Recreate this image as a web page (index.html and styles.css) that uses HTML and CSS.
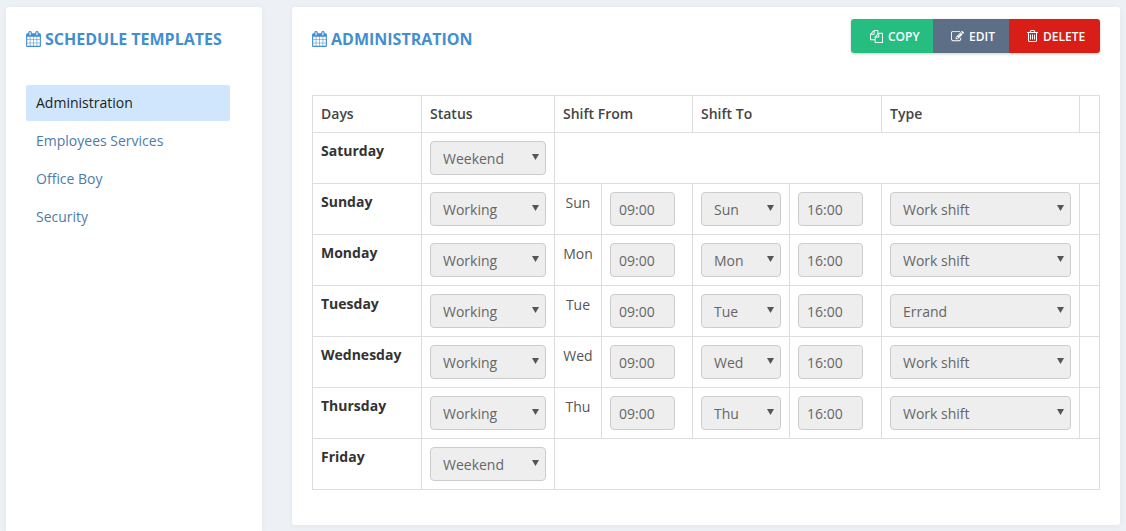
FILE: index.html
```html
<!DOCTYPE html>
<html lang="en">
<head>
    <meta charset="UTF-8">
    <meta name="viewport" content="width=device-width, initial-scale=1.0">
    <title>Schedule Templates</title>
    <link rel="stylesheet" href="styles.css">
</head>
<body>
    <svg width="0" height="0" class="iconDefs">
        <symbol id="iconCalendar" viewBox="0 0 1664 1792">
            <path d="M128 1664h288v-288H128v288zm352 0h320v-288H480v288zm-352-352h288V992H128v320zm352 0h320V992H480v320zM128 928h288V640H128v288zm736 736h320v-288H864v288zM480 928h320V640H480v288zm768 736h288v-288h-288v288zm-384-352h320V992H864v320zM512 448V160q0-13-9.500-22.500T480 128h-64q-13 0-22.500 9.500T384 160v288q0 13 9.500 22.500T416 480h64q13 0 22.500-9.500T512 448zm736 864h288V992h-288v320zM864 928h320V640H864v288zm384 0h288V640h-288v288zm32-480V160q0-13-9.500-22.500T1248 128h-64q-13 0-22.500 9.500T1152 160v288q0 13 9.500 22.500T1184 480h64q13 0 22.500-9.500T1280 448zm384-64v1280q0 52-38 90t-90 38H128q-52 0-90-38t-38-90V384q0-52 38-90t90-38h128v-96q0-66 47-113T416 0h64q66 0 113 47t47 113v96h384v-96q0-66 47-113t113-47h64q66 0 113 47t47 113v96h128q52 0 90 38t38 90z"/>
        </symbol>
        <symbol id="iconCopy" viewBox="0 0 1792 1792">
            <path d="M1696 384q40 0 68 28t28 68v1216q0 40-28 68t-68 28H736q-40 0-68-28t-28-68v-288H96q-40 0-68-28t-28-68V640q0-40 20-88t48-76L476 68q28-28 76-48t88-20h416q40 0 68 28t28 68v328q68-40 128-40h416zm-544 213L853 896h299V597zM512 213L213 512h299V213zm196 647l316-316V128H640v416q0 40-28 68t-68 28H128v640h512v-256q0-40 20-88t48-76zm956 804V512h-384v416q0 40-28 68t-68 28H768v640h896z"/>
        </symbol>
        <symbol id="iconEdit" viewBox="0 0 1792 1792">
            <path d="M888 1184l116-116-152-152-116 116v56h96v96h56zm440-720q-16-16-33 1L945 815q-17 17-1 33t33-1l350-350q17-17 1-33zm80 594v190q0 119-84.500 203.500T1120 1536H288q-119 0-203.500-84.500T0 1248V416q0-119 84.500-203.500T288 128h832q63 0 117 25 15 7 18 23 3 17-9 29l-49 49q-14 14-32 8-23-6-45-6H288q-66 0-113 47t-47 113v832q0 66 47 113t113 47h832q66 0 113-47t47-113v-126q0-13 9-22l64-64q15-15 35-7t20 29zm-96-738l288 288-672 672H640V992zm444 132l-92 92-288-288 92-92q28-28 68-28t68 28l152 152q28 28 28 68t-28 68z"/>
        </symbol>
        <symbol id="iconTrash" viewBox="192 128 1408 1664">
            <path d="M704 736v576q0 14-9 23t-23 9h-64q-14 0-23-9t-9-23V736q0-14 9-23t23-9h64q14 0 23 9t9 23zm256 0v576q0 14-9 23t-23 9h-64q-14 0-23-9t-9-23V736q0-14 9-23t23-9h64q14 0 23 9t9 23zm256 0v576q0 14-9 23t-23 9h-64q-14 0-23-9t-9-23V736q0-14 9-23t23-9h64q14 0 23 9t9 23zm128 724V512H448v948q0 22 7 40.500t14.500 27 10.500 8.500h832q3 0 10.500-8.500t14.500-27 7-40.500zM672 384h448l-48-117q-7-9-17-11H738q-10 2-17 11zm928 32v64q0 14-9 23t-23 9h-96v948q0 83-47 143.500t-113 60.500H480q-66 0-113-58.500T320 1464V512h-96q-14 0-23-9t-9-23v-64q0-14 9-23t23-9h309l70-167q15-37 54-63t79-26h320q40 0 79 26t54 63l70 167h309q14 0 23 9t9 23z"/>
        </symbol>
    </svg>

    <div class="page">
        <aside class="sidebar">
            <h2 class="cardTitle"><svg class="titleIcon"><use href="#iconCalendar"/></svg>Schedule Templates</h2>
            <ul class="templateList">
                <li class="templateItem active">Administration</li>
                <li class="templateItem">Employees Services</li>
                <li class="templateItem">Office Boy</li>
                <li class="templateItem">Security</li>
            </ul>
        </aside>

        <main class="content">
            <div class="contentHead">
                <h2 class="cardTitle"><svg class="titleIcon"><use href="#iconCalendar"/></svg>Administration</h2>
                <div class="btnGroup">
                    <button class="btn btnCopy"><svg class="btnIcon"><use href="#iconCopy"/></svg>Copy</button>
                    <button class="btn btnEdit"><svg class="btnIcon"><use href="#iconEdit"/></svg>Edit</button>
                    <button class="btn btnDelete"><svg class="btnIcon trashIcon"><use href="#iconTrash"/></svg>Delete</button>
                </div>
            </div>

            <table class="scheduleTable">
                <colgroup>
                    <col class="colDay">
                    <col class="colStatus">
                    <col class="colFromDay">
                    <col class="colFromTime">
                    <col class="colToDay">
                    <col class="colToTime">
                    <col class="colType">
                    <col>
                </colgroup>
                <thead>
                    <tr>
                        <th>Days</th>
                        <th>Status</th>
                        <th colspan="2">Shift From</th>
                        <th colspan="2">Shift To</th>
                        <th>Type</th>
                        <th></th>
                    </tr>
                </thead>
                <tbody>
                    <tr>
                        <td class="dayName">Saturday</td>
                        <td><select class="field" disabled><option>Weekend</option></select></td>
                        <td colspan="6"></td>
                    </tr>
                    <tr>
                        <td class="dayName">Sunday</td>
                        <td><select class="field" disabled><option>Working</option></select></td>
                        <td class="shortDay">Sun</td>
                        <td><input class="field" value="09:00" disabled></td>
                        <td><select class="field" disabled><option>Sun</option></select></td>
                        <td><input class="field" value="16:00" disabled></td>
                        <td><select class="field" disabled><option>Work shift</option></select></td>
                        <td></td>
                    </tr>
                    <tr>
                        <td class="dayName">Monday</td>
                        <td><select class="field" disabled><option>Working</option></select></td>
                        <td class="shortDay">Mon</td>
                        <td><input class="field" value="09:00" disabled></td>
                        <td><select class="field" disabled><option>Mon</option></select></td>
                        <td><input class="field" value="16:00" disabled></td>
                        <td><select class="field" disabled><option>Work shift</option></select></td>
                        <td></td>
                    </tr>
                    <tr>
                        <td class="dayName">Tuesday</td>
                        <td><select class="field" disabled><option>Working</option></select></td>
                        <td class="shortDay">Tue</td>
                        <td><input class="field" value="09:00" disabled></td>
                        <td><select class="field" disabled><option>Tue</option></select></td>
                        <td><input class="field" value="16:00" disabled></td>
                        <td><select class="field" disabled><option>Errand</option></select></td>
                        <td></td>
                    </tr>
                    <tr>
                        <td class="dayName">Wednesday</td>
                        <td><select class="field" disabled><option>Working</option></select></td>
                        <td class="shortDay">Wed</td>
                        <td><input class="field" value="09:00" disabled></td>
                        <td><select class="field" disabled><option>Wed</option></select></td>
                        <td><input class="field" value="16:00" disabled></td>
                        <td><select class="field" disabled><option>Work shift</option></select></td>
                        <td></td>
                    </tr>
                    <tr>
                        <td class="dayName">Thursday</td>
                        <td><select class="field" disabled><option>Working</option></select></td>
                        <td class="shortDay">Thu</td>
                        <td><input class="field" value="09:00" disabled></td>
                        <td><select class="field" disabled><option>Thu</option></select></td>
                        <td><input class="field" value="16:00" disabled></td>
                        <td><select class="field" disabled><option>Work shift</option></select></td>
                        <td></td>
                    </tr>
                    <tr>
                        <td class="dayName">Friday</td>
                        <td><select class="field" disabled><option>Weekend</option></select></td>
                        <td colspan="6"></td>
                    </tr>
                </tbody>
            </table>
        </main>
    </div>
</body>
</html>
```

FILE: styles.css
```css
*{
    box-sizing: border-box;
    font-family: "Open Sans", sans-serif;
}

body{
    margin: 0;
    background-color: #edf1f6;
    color: #333;
    font-size: 14px;
    line-height: 20px;
}

.iconDefs{
    display: block;
}

.page{
    display: flex;
    align-items: flex-start;
    gap: 30px;
    height: 100vh;
    padding: 7px 6px 0 6px;
}

.sidebar{
    flex: 0 0 256px;
    align-self: stretch;
    padding: 20px 32px 0 20px;
    background-color: #fff;
    border-radius: 3px 3px 0 0;
    box-shadow: 0 1px 6px rgba(0, 0, 0, 0.05);
}

.content{
    flex: 1 1 0;
    min-width: 0;
    height: 518px;
    padding: 12px 20px 0 20px;
    background-color: #fff;
    border-radius: 3px;
    box-shadow: 0 1px 6px rgba(0, 0, 0, 0.05);
}

.cardTitle{
    display: flex;
    align-items: center;
    margin: 0;
    height: 24px;
    color: #428fd0;
    font-size: 16px;
    font-weight: 700;
    text-transform: uppercase;
}

.titleIcon{
    width: 15px;
    height: 16px;
    margin-right: 4px;
    fill: #428fd0;
}

.templateList{
    list-style: none;
    margin: 34px 0 0 0;
    padding: 0;
}

.templateItem{
    height: 36px;
    margin-bottom: 2px;
    padding: 8px 10px;
    color: #4f7ba6;
    border-radius: 2px;
}

.templateItem.active{
    background-color: #cfe6fd;
    color: #222;
}

.contentHead{
    display: flex;
    justify-content: space-between;
    align-items: flex-start;
    height: 76px;
}

.contentHead .cardTitle{
    margin-top: 8px;
}

.btnGroup{
    display: flex;
    border-radius: 3px;
    box-shadow: 0 1px 3px rgba(0, 0, 0, 0.2);
}

.btn{
    display: flex;
    align-items: center;
    height: 34px;
    padding: 0 0 0 18px;
    border: none;
    color: #fff;
    font-size: 12px;
    font-weight: 600;
    text-transform: uppercase;
}

.btnIcon{
    width: 13px;
    height: 13px;
    margin-right: 5px;
    fill: currentColor;
}

.trashIcon{
    width: 11px;
}

.btnCopy{
    width: 82px;
    padding-left: 19px;
    background-color: #26bd81;
    border-radius: 3px 0 0 3px;
}

.btnEdit{
    width: 76px;
    background-color: #5d6e87;
}

.btnDelete{
    width: 91px;
    background-color: #d81e17;
    border-radius: 0 3px 3px 0;
}

.scheduleTable{
    width: 100%;
    table-layout: fixed;
    border-collapse: collapse;
}

.colDay{ width: 109px; }
.colStatus{ width: 133px; }
.colFromDay{ width: 47px; }
.colFromTime{ width: 91px; }
.colToDay{ width: 97px; }
.colToTime{ width: 92px; }
.colType{ width: 198px; }

.scheduleTable th,
.scheduleTable td{
    padding: 8px;
    border: 1px solid #ddd;
    text-align: left;
    vertical-align: top;
}

.scheduleTable th{
    color: #444;
    font-weight: 600;
}

.dayName{
    font-weight: 700;
}

.scheduleTable .shortDay{
    padding: 9px 0 0 0;
    color: #555;
    text-align: center;
}

.field{
    display: block;
    height: 34px;
    padding: 6px 12px;
    background-color: #eee;
    border: 1px solid #ccc;
    border-radius: 4px;
    color: #666;
    font-size: 14px;
    opacity: 1;
}

input.field{
    width: 65px;
    padding: 6px 8px;
}

select.field{
    width: 100%;
    appearance: none;
    background-image: url("data:image/svg+xml,%3Csvg xmlns='http://www.w3.org/2000/svg' width='7' height='6'%3E%3Cpath d='M0 0h7L3.500 6z' fill='%23555'/%3E%3C/svg%3E");
    background-repeat: no-repeat;
    background-position: right 6px top 12px;
}

.scheduleTable td:nth-child(5) select.field{
    width: 80px;
}

.scheduleTable td:nth-child(7) select.field{
    width: 181px;
}
```
